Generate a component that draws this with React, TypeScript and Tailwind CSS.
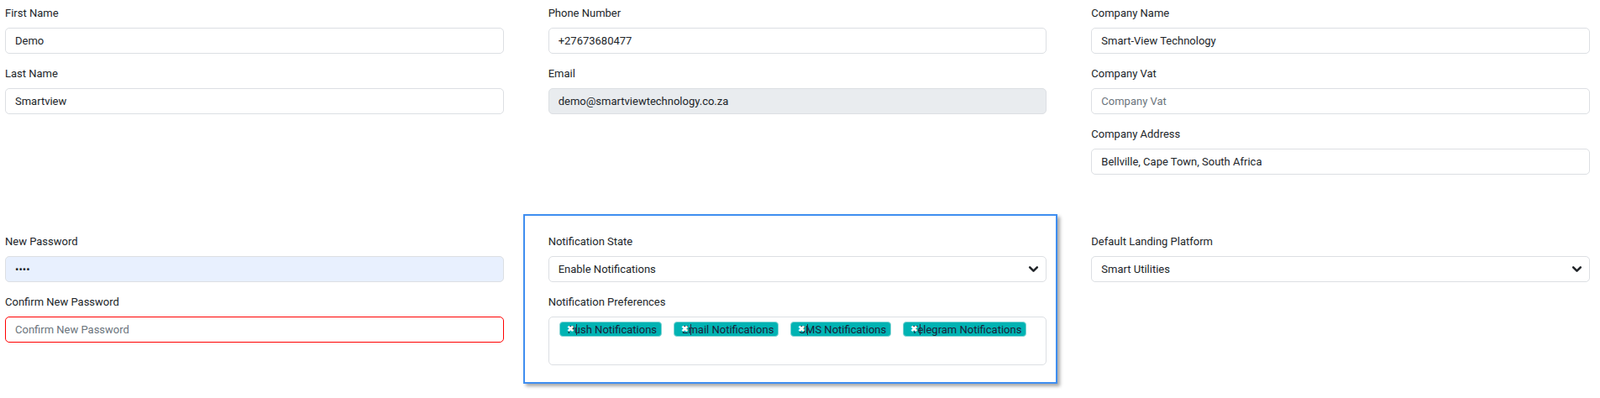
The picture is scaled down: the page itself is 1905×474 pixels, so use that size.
const inputBase =
    "block w-full h-[31px] rounded-[5px] border border-[#dcdfe3] px-[11px] text-[13px] text-[#212529] outline-none placeholder:text-[#6c757d]";

function Field({ label, value, placeholder, className = "", type = "text" }: { label: string; value?: string; placeholder?: string; className?: string; type?: string }) {
    return (
        <div className="mb-[14px]">
            <label className="block text-[13px] leading-[20px] text-[#212529] mb-[7px]">{label}</label>
            <input
                type={type}
                readOnly
                defaultValue={value}
                placeholder={placeholder}
                className={`${inputBase} ${className}`}
            />
        </div>
    );
}

function Chevron() {
    return (
        <svg width="13" height="13" viewBox="0 0 12 12" className="text-[#212529]">
            <polyline points="2,4 6,8 10,4" fill="none" stroke="currentColor" strokeWidth="2.4" strokeLinecap="round" strokeLinejoin="round" />
        </svg>
    );
}

function SelectField({ label, value }: { label: string; value: string }) {
    return (
        <div className="mb-[14px]">
            <label className="block text-[13px] leading-[20px] text-[#212529] mb-[7px]">{label}</label>
            <div className="flex items-center justify-between h-[31px] rounded-[5px] border border-[#dcdfe3] bg-white pl-[11px] pr-[8px] text-[13px] text-[#212529]">
                <span>{value}</span>
                <Chevron />
            </div>
        </div>
    );
}

function Chip({ text }: { text: string }) {
    return (
        <span className="relative inline-flex items-center h-[18px] rounded-[4px] border border-[#7fd3d3] bg-[#00b3b3] pl-[9px] pr-[5px] text-[13px] leading-[15px] text-[#1b2238]">
            {text}
            <span className="absolute left-[8px] top-[2px] text-[10px] leading-[12px] font-bold text-white">✖</span>
            <span className="absolute left-[19px] top-[2px] h-[13px] w-px bg-[#2b2b40]"></span>
        </span>
    );
}

export default function App() {
    const prefs = ["Push Notifications", "Email Notifications", "SMS Notifications", "Telegram Notifications"];

    return (
        <div className="min-h-[474px] bg-white pl-[6px] pr-[12px] pt-[6px] font-['Roboto','Liberation_Sans',sans-serif]">
            <div className="grid grid-cols-3 gap-x-[53px]">
                <div>
                    <Field label="First Name" value="Demo" />
                    <Field label="Last Name" value="Smartview" />
                </div>
                <div>
                    <Field label="Phone Number" value="+27673680477" />
                    <Field label="Email" value="demo@smartviewtechnology.co.za" className="bg-[#e9ecef]" />
                </div>
                <div>
                    <Field label="Company Name" value="Smart-View Technology" />
                    <Field label="Company Vat" placeholder="Company Vat" />
                    <Field label="Company Address" value="Bellville, Cape Town, South Africa" />
                </div>
            </div>

            <div className="grid grid-cols-3 gap-x-[53px] mt-[33px] items-start">
                <div className="pt-[23px]">
                    <Field label="New Password" type="password" value="demo" className="bg-[#e8f0fe]" />
                    <Field label="Confirm New Password" type="password" placeholder="Confirm New Password" className="border-[#ff0000]" />
                </div>
                <div className="-ml-[30px] -mr-[13px] border-2 border-[#3f8ef0] pl-[28px] pr-[11px] pt-[21px] pb-[20px] shadow-[3px_3px_4px_rgba(0,0,0,0.35)]">
                    <SelectField label="Notification State" value="Enable Notifications" />
                    <label className="block text-[13px] leading-[20px] text-[#212529] mb-[7px]">Notification Preferences</label>
                    <div className="h-[58px] rounded-[5px] border border-[#dcdfe3] pl-[12px] pt-[5px]">
                        <div className="flex gap-x-[14px]">
                            {prefs.map((p) => (
                                <Chip key={p} text={p} />
                            ))}
                        </div>
                    </div>
                </div>
                <div className="pt-[23px]">
                    <SelectField label="Default Landing Platform" value="Smart Utilities" />
                </div>
            </div>
        </div>
    );
}
